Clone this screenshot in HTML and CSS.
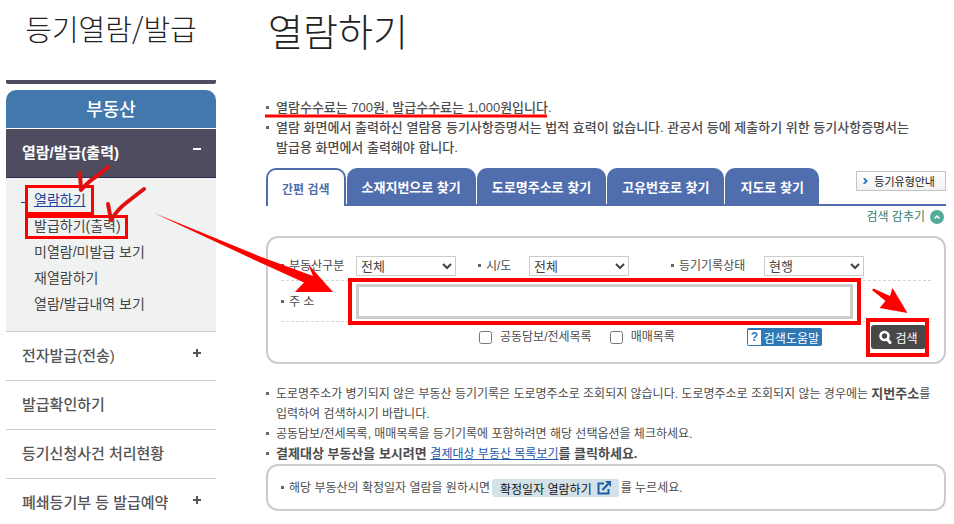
FILE: index.html
```html
<!DOCTYPE html>
<html lang="ko">
<head>
    <meta charset="UTF-8" />
    <meta name="viewport" content="width=device-width, initial-scale=1.0" />
    <title>열람하기</title>
    <link rel="stylesheet" href="styles.css">
</head>
<body>
    <div class="page">
        <!-- Left menu -->
        <nav class="sidebar">
            <h2 class="side-title">등기열람/발급</h2>
            <div class="side-head">부동산</div>
            <button type="button" class="menu-item menu-open">열람/발급(출력) <span class="sign minus"></span></button>
            <ul class="submenu">
                <li><a href="#" class="current">열람하기</a></li>
                <li><a href="#">발급하기(출력)</a></li>
                <li><a href="#">미열람/미발급 보기</a></li>
                <li><a href="#">재열람하기</a></li>
                <li><a href="#">열람/발급내역 보기</a></li>
            </ul>
            <button type="button" class="menu-item">전자발급(전송) <span class="sign plus"></span></button>
            <a href="#" class="menu-item">발급확인하기</a>
            <a href="#" class="menu-item">등기신청사건 처리현황</a>
            <button type="button" class="menu-item menu-last">폐쇄등기부 등 발급예약 <span class="sign plus"></span></button>
        </nav>

        <main class="content">
            <h1 class="title">열람하기</h1>
            <ul class="notes notice">
                <li>열람수수료는 700원, 발급수수료는 1,000원입니다.</li>
                <li>열람 화면에서 출력하신 열람용 등기사항증명서는 법적 효력이 없습니다. 관공서 등에 제출하기 위한 등기사항증명서는 발급용 화면에서 출력해야 합니다.</li>
            </ul>

            <!-- Search tabs -->
            <div class="tabs">
                <button type="button" class="tab tab-active">간편 검색</button>
                <button type="button" class="tab">소재지번으로 찾기</button>
                <button type="button" class="tab">도로명주소로 찾기</button>
                <button type="button" class="tab">고유번호로 찾기</button>
                <button type="button" class="tab">지도로 찾기</button>
                <button type="button" class="guide-btn">
                    <svg width="5" height="6" viewBox="0 0 5 6"><path d="M0 0h2l3 3-3 3H0l2-3z" fill="#2f7fc0"/></svg>
                    등기유형안내
                </button>
            </div>
            <button type="button" class="fold-btn">
                검색 감추기
                <svg width="14" height="14" viewBox="0 0 14 14">
                    <circle cx="7" cy="7" r="7" fill="#52ab9b"/>
                    <path d="M4.500 8.500L7 6l2.500 2.500" fill="none" stroke="#fff" stroke-width="1.500"/>
                </svg>
            </button>

            <!-- Search form -->
            <form class="search-box">
                <div class="row row-selects">
                    <label for="kind" class="dot">부동산구분</label>
                    <select id="kind"><option>전체</option></select>
                    <label for="city" class="dot label-city">시/도</label>
                    <select id="city"><option>전체</option></select>
                    <label for="state" class="dot label-state">등기기록상태</label>
                    <select id="state"><option>현행</option></select>
                </div>
                <div class="row row-address">
                    <label for="address" class="dot">주 소</label>
                    <input type="text" id="address" class="address">
                </div>
                <div class="row row-options">
                    <label class="check"><input type="checkbox"> 공동담보/전세목록</label>
                    <label class="check"><input type="checkbox"> 매매목록</label>
                    <button type="button" class="help-btn"><span class="help-mark">?</span>검색도움말</button>
                    <button type="button" class="search-btn">
                        <svg width="13" height="14" viewBox="0 0 13 14">
                            <circle cx="5.500" cy="6" r="4" fill="none" stroke="#fff" stroke-width="2.600"/>
                            <path d="M8.500 9.500l2.500 3" stroke="#fff" stroke-width="3" stroke-linecap="round"/>
                        </svg>
                        검색
                    </button>
                </div>
            </form>

            <ul class="notes">
                <li>도로명주소가 병기되지 않은 부동산 등기기록은 도로명주소로 조회되지 않습니다. 도로명주소로 조회되지 않는 경우에는 <b>지번주소</b>를 <br>입력하여 검색하시기 바랍니다.</li>
                <li>공동담보/전세목록, 매매목록을 등기기록에 포함하려면 해당 선택옵션을 체크하세요.</li>
                <li><b>결제대상 부동산을 보시려면 <a href="#" class="pay-link">결제대상 부동산 목록보기</a>를 클릭하세요.</b></li>
            </ul>
            <div class="date-box">
                <span class="dot">해당 부동산의 확정일자 열람을 원하시면</span>
                <button type="button" class="date-btn">
                    확정일자 열람하기
                    <svg width="14" height="14" viewBox="0 0 14 14">
                        <path d="M7 2.500H1.500v10h10V8" fill="none" stroke="#1c5fa5" stroke-width="2"/>
                        <path d="M5.500 9L11 3" stroke="#1c5fa5" stroke-width="2.200"/>
                        <path d="M8 0h6v6z" fill="#1c5fa5"/>
                    </svg>
                </button>
                <span>를 누르세요.</span>
            </div>
        </main>

        <!-- Red guide marks over the page -->
        <svg class="marks" width="954" height="524" viewBox="0 0 954 524">
            <g fill="none" stroke="#f00" stroke-width="3">
                <rect x="26.500" y="186.500" width="66" height="27"/>
                <rect x="26.500" y="216.500" width="100" height="21"/>
                <rect x="350" y="280" width="509" height="43" stroke-width="4"/>
                <rect x="868" y="320" width="59" height="35" stroke-width="4"/>
                <path d="M265 116h282"/>
            </g>
            <g fill="#f00">
                <path d="M154 213L260 256.500l53 19.500 -5-12 25 28h-38l9-9.500L260 262.500z"/>
                <path d="M872 290l1.500-1.500L890 296l2.500-8 15 25-28-5 6-7z"/>
            </g>
            <g fill="none" stroke="#e00f0f" stroke-width="4" stroke-linecap="round" stroke-linejoin="round">
                <path d="M80 173L81 190Q90 180 97 176L108 167"/>
                <path d="M108 204L111 220Q118 209 126 203L144 189"/>
            </g>
        </svg>
    </div>
</body>
</html>
```

FILE: styles.css
```css
* {
    box-sizing: border-box;
}
body {
    margin: 0;
    font-family: "Liberation Sans", "Noto Sans CJK KR", sans-serif;
    font-size: 12px;
    line-height: 20px;
    color: #4c4c4c;
    background-color: #fff;
    word-break: keep-all;
}
button, select, input {
    font-family: inherit;
    font-size: 12px;
}
button {
    cursor: pointer;
}
ul {
    list-style: none;
    margin: 0;
    padding: 0;
}
.page {
    position: relative;
    display: flex;
    gap: 50px;
    padding: 0 8px 0 6px;
}

/* left menu */
.sidebar {
    width: 210px;
    flex-shrink: 0;
}
.side-title {
    margin: 0 0 6px;
    padding: 8px 0 32px;
    border-bottom: 4px solid #4e4c5e;
    border-radius: 2px;
    font-family: "Noto Sans CJK KR", sans-serif;
    font-size: 29px;
    line-height: 40px;
    font-weight: 300;
    text-align: center;
    color: #222;
}
.side-head {
    padding: 5px 0 3px;
    margin-bottom: 1px;
    border-radius: 10px 10px 0 0;
    background-color: #4378ac;
    color: #fff;
    font-size: 18px;
    line-height: 30px;
    font-weight: 500;
    text-align: center;
}
.menu-item {
    display: flex;
    justify-content: space-between;
    width: 100%;
    padding: 14px 15px 14px 16px;
    border: 0;
    border-bottom: 1px solid #ccc;
    background: none;
    color: #555;
    font-size: 15px;
    line-height: 20px;
    font-weight: 500;
    text-align: left;
    text-decoration: none;
}
.menu-open {
    border-bottom-color: #2c2b48;
    background-color: #4e4c5e;
    color: #fff;
    font-weight: 700;
}
.menu-last {
    padding-bottom: 10px;
    border-bottom: 0;
}
.sign {
    position: relative;
    width: 8px;
    height: 2px;
    margin-top: 5px;
    background-color: currentColor;
}
.plus {
    margin-top: 6px;
}
.plus::after {
    content: "";
    position: absolute;
    left: 3px;
    top: -3px;
    width: 2px;
    height: 8px;
    background-color: currentColor;
}
.submenu {
    padding: 9px 0 14px 28px;
    border-bottom: 1px solid #ccc;
    background-color: #f0f2f2;
    font-size: 14px;
    line-height: 26px;
}
.submenu a {
    color: #444;
    text-decoration: none;
}
.submenu .current {
    position: relative;
    color: #1c3f9c;
    text-decoration: underline;
}
.submenu .current::before {
    content: "";
    position: absolute;
    left: -13px;
    top: 10px;
    width: 6px;
    height: 1px;
    background-color: #1c3f9c;
}

/* right side */
.content {
    flex: 1;
    min-width: 0;
}
.title {
    margin: 0;
    padding: 8px 0 40px 2px;
    font-size: 38px;
    line-height: 50px;
    font-weight: 300;
    color: #222;
}
.notes li {
    position: relative;
    padding-left: 10px;
}
.notes li::before,
.dot::before {
    content: "";
    position: absolute;
    left: 0;
    top: 8px;
    width: 3px;
    height: 3px;
    background-color: #666;
}
.notice {
    margin-bottom: 10px;
    font-size: 13px;
    font-weight: 500;
}
.dot {
    position: relative;
    padding-left: 8px;
}

/* tabs */
.tabs {
    display: flex;
    align-items: flex-start;
    gap: 1px;
    border-bottom: 2px solid #506eae;
}
.tab {
    height: 36px;
    padding: 0 15px;
    border: 0;
    border-radius: 10px 10px 0 0;
    background-color: #506eae;
    color: #fff;
    font-size: 13px;
    font-weight: 700;
}
.tab-active {
    height: 38px;
    padding: 0 14px;
    margin-bottom: -2px;
    border: 2px solid #506eae;
    border-bottom: 0;
    background-color: #fff;
    color: #506eae;
    font-size: 12px;
}
.guide-btn {
    display: flex;
    align-items: center;
    gap: 6px;
    height: 20px;
    margin: 3px 0 0 auto;
    padding: 0 10px 0 6px;
    border: 1px solid #c4c4c4;
    background: linear-gradient(#fff, #f1f1f1);
    color: #222;
    font-size: 11px;
}
.fold-btn {
    display: flex;
    align-items: center;
    gap: 5px;
    margin: 1px 2px 9px auto;
    padding: 0;
    border: 0;
    background: none;
    color: #34806f;
    line-height: 20px;
}

/* search form */
.search-box {
    padding: 18px 13px 0;
    margin-bottom: 20px;
    border: 2px solid #ccc;
    border-radius: 12px;
}
.row {
    display: flex;
    align-items: center;
}
.row-selects {
    padding-bottom: 4px;
    border-bottom: 1px dashed #d4d4d4;
}
.row-selects label,
.row-address label {
    width: 75px;
}
.row-selects .label-city {
    width: 51px;
    margin-left: 22px;
}
.row-selects .label-state {
    width: 93px;
    margin-left: 42px;
}
.row select {
    width: 100px;
    height: 20px;
    padding: 0;
    border: 1px solid #ccc;
    background-color: #fff;
    color: #444;
    font-size: 13px;
}
.row-address {
    padding: 3px 78px 2px 0;
    border-bottom: 1px dashed #d4d4d4;
}
.address {
    flex: 1;
    height: 35px;
    border: 3px solid #ccc;
    outline: none;
}
.row-options {
    padding: 3px 5px 13px 198px;
}
.check {
    display: flex;
    align-items: center;
    gap: 8px;
    margin-right: 18px;
}
.check input {
    width: 13px;
    height: 13px;
    margin: 0;
}
.help-btn {
    display: flex;
    align-items: center;
    gap: 3px;
    height: 18px;
    margin-left: auto;
    padding: 1px 3px 1px 1px;
    border: 0;
    border-radius: 2px;
    background-color: #2f78b5;
    color: #fff;
}
.help-mark {
    width: 13px;
    background-color: #fff;
    color: #2f78b5;
    line-height: 15px;
    font-weight: 700;
}
.search-btn {
    display: flex;
    align-items: center;
    justify-content: center;
    gap: 3px;
    width: 55px;
    height: 24px;
    margin-left: 49px;
    padding: 0;
    border: 0;
    border-radius: 3px;
    background-color: #484848;
    color: #fff;
}

/* bottom notes */
.notes b {
    font-size: 13px;
}
.pay-link {
    color: #2459a9;
    font-size: 12px;
    font-weight: 400;
}
.date-box {
    display: flex;
    align-items: center;
    gap: 2px;
    padding: 12px 13px 11px;
    border: 2px solid #ccc;
    border-radius: 12px;
}
.date-btn {
    display: flex;
    align-items: center;
    gap: 5px;
    height: 18px;
    padding: 0 8px;
    border: 0;
    border-radius: 3px;
    background-color: #d3e2e8;
    color: #111;
}

/* guide marks */
.marks {
    position: absolute;
    left: 0;
    top: 0;
    pointer-events: none;
}
```
